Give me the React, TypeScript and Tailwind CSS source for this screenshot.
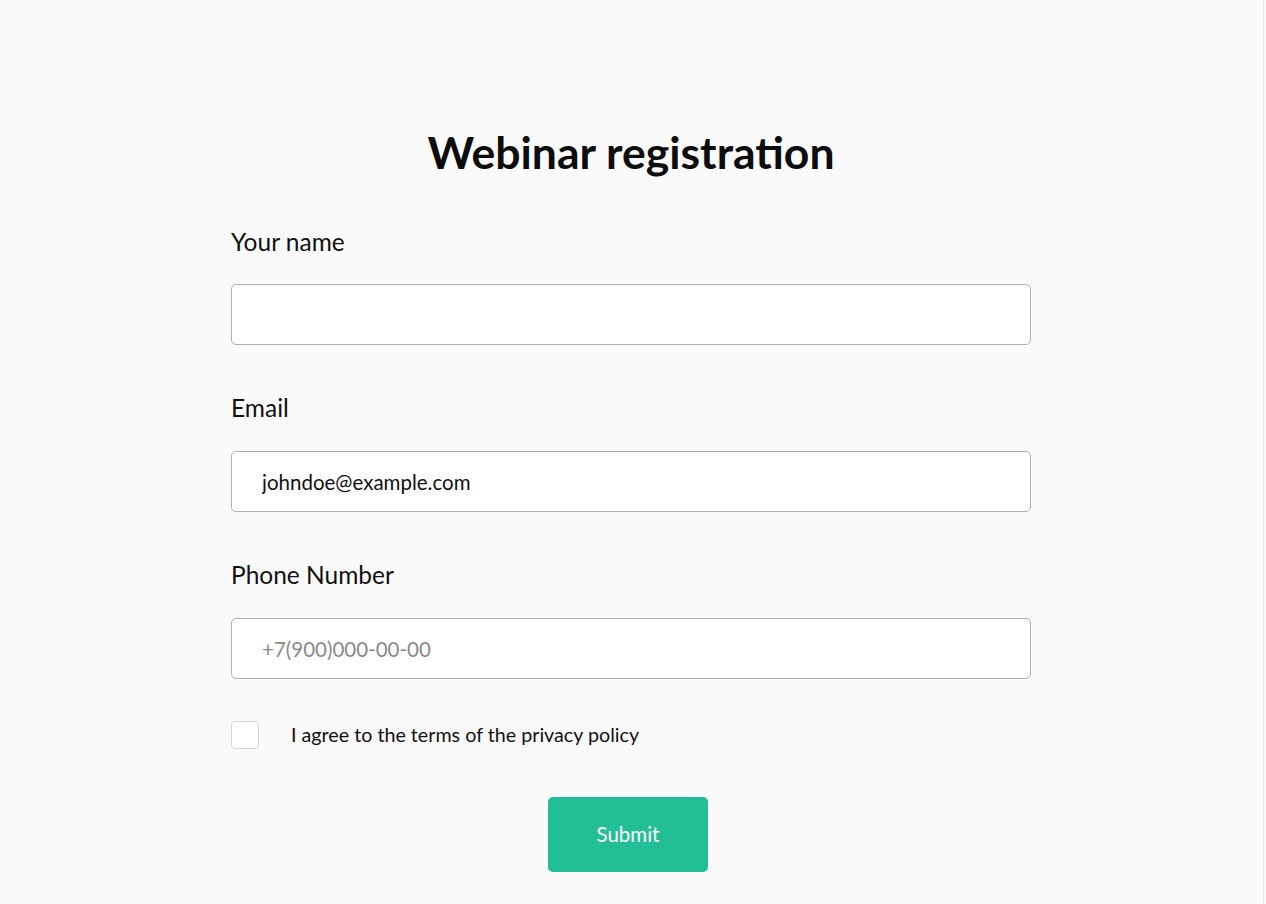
import React from "react";

export default function App() {
  return (
    <div className="flex min-h-[904px] w-full bg-[#fafafa]">
      <div className="flex-1 border-r border-[#e6e6e6] pr-[1px]">
        <div className="mx-auto w-[800px] pt-[122px] font-['Lato','Noto_Sans',sans-serif] text-[#111]">
          <h1 className="text-center text-[44.5px] font-bold leading-[60px] text-[#0d0d0d]">Webinar registration</h1>
          <div className="mt-[42px] flex flex-col">
            <label className="text-[24.5px] leading-[36px] text-[#111]">Your name</label>
            <input className="mt-[24px] h-[61px] w-full rounded-[5px] border border-[#b0b0b0] bg-white px-[30px] text-[20.5px] outline-none" />
            <label className="mt-[45px] text-[24.5px] leading-[36px] text-[#111]">Email</label>
            <input
              defaultValue="johndoe@example.com"
              className="mt-[25px] h-[61px] w-full rounded-[5px] border border-[#b0b0b0] bg-white px-[30px] text-[20.5px] text-[#111] outline-none"
            />
            <label className="mt-[45px] text-[24.5px] leading-[36px] text-[#111]">Phone Number</label>
            <input
              placeholder="+7(900)000-00-00"
              className="mt-[25px] h-[61px] w-full rounded-[5px] border border-[#b0b0b0] bg-white px-[30px] text-[20.5px] outline-none placeholder:text-[#8a8a8a]"
            />
            <div className="mt-[42px] flex items-center">
              <div className="h-[28px] w-[28px] rounded-[4px] border border-[#d4d4d4] bg-white" />
              <span className="ml-[32px] text-[19.7px] leading-[28px] text-[#111]">I agree to the terms of the privacy policy</span>
            </div>
            <div className="mt-[48px] flex">
              <button className="ml-[317px] h-[75px] w-[160px] rounded-[5px] bg-[#22bf96] text-[20.5px] text-white">Submit</button>
            </div>
          </div>
        </div>
      </div>
      <div className="w-[2px] bg-[#fafafa]" />
    </div>
  );
}
